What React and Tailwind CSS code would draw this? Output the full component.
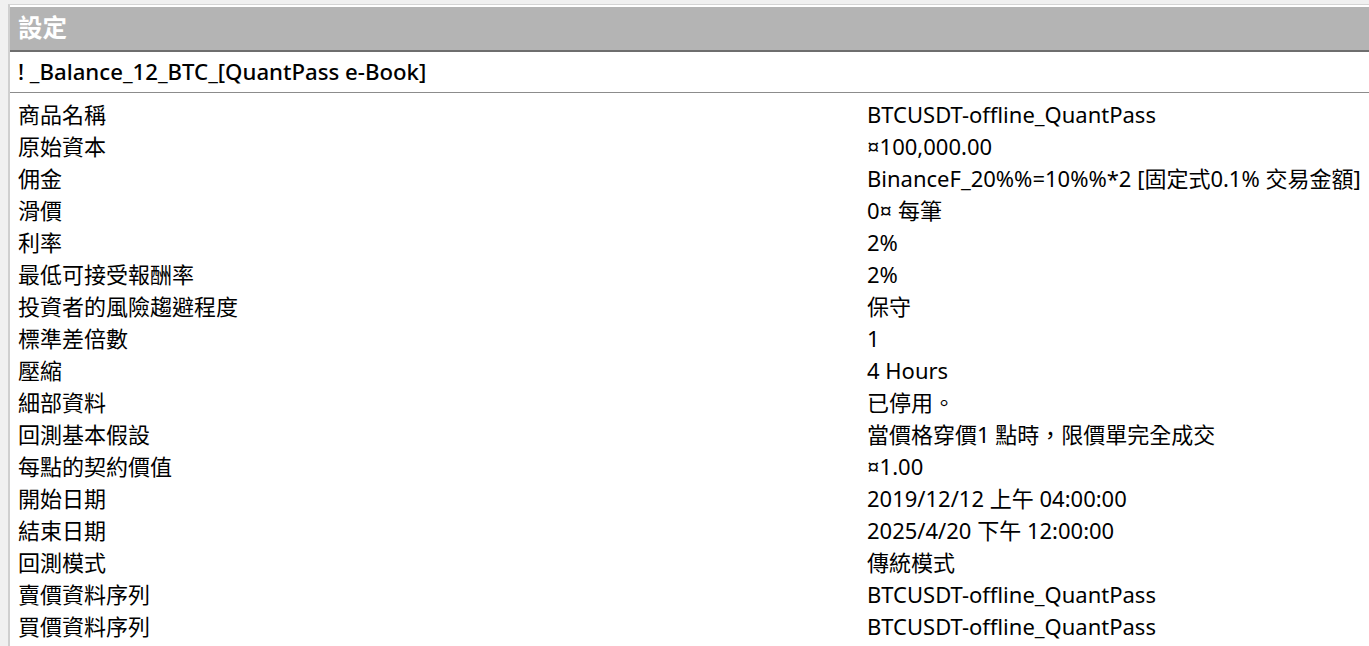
import React from "react";

const rows = [
  ["商品名稱", "BTCUSDT-offline_QuantPass"],
  ["原始資本", "¤100,000.00"],
  ["佣金", "BinanceF_20%%=10%%*2 [固定式0.1% 交易金額]"],
  ["滑價", "0¤ 每筆"],
  ["利率", "2%"],
  ["最低可接受報酬率", "2%"],
  ["投資者的風險趨避程度", "保守"],
  ["標準差倍數", "1"],
  ["壓縮", "4 Hours"],
  ["細部資料", "已停用。"],
  ["回測基本假設", "當價格穿價1 點時，限價單完全成交"],
  ["每點的契約價值", "¤1.00"],
  ["開始日期", "2019/12/12 上午 04:00:00"],
  ["結束日期", "2025/4/20 下午 12:00:00"],
  ["回測模式", "傳統模式"],
  ["賣價資料序列", "BTCUSDT-offline_QuantPass"],
  ["買價資料序列", "BTCUSDT-offline_QuantPass"],
];

export default function App() {
  return (
    <div
      className="w-[1369px] h-[646px] overflow-hidden bg-[#f0f0f0] pt-[4px] pl-[8px]"
      style={{ fontFamily: '"Noto Sans", "Noto Sans CJK TC", sans-serif' }}
    >
      <div className="h-full border-t border-t-[#d4d4d4] border-l-2 border-l-[#cfcfcf] pt-[2px] bg-white">
        <div className="h-[45px] bg-[#b4b4b4] border-b-2 border-b-[#6e6e6e] flex items-center pl-[8px]">
          <span className="text-white font-bold text-[24.5px] leading-none">設定</span>
        </div>
        <div className="h-[41px] border-b border-b-[#8c8c8c] flex items-center pl-[8px]">
          <span className="text-black font-medium text-[22.2px] leading-none">! _Balance_12_BTC_[QuantPass e-Book]</span>
        </div>
        <div className="pt-[5px]">
          {rows.map(([k, v]) => (
            <div key={k} className="h-[32px] flex items-center text-[22px] text-black leading-none">
              <div className="w-[857px] pl-[8px] shrink-0 whitespace-nowrap">{k}</div>
              <div className="whitespace-nowrap">{v}</div>
            </div>
          ))}
        </div>
      </div>
    </div>
  );
}
